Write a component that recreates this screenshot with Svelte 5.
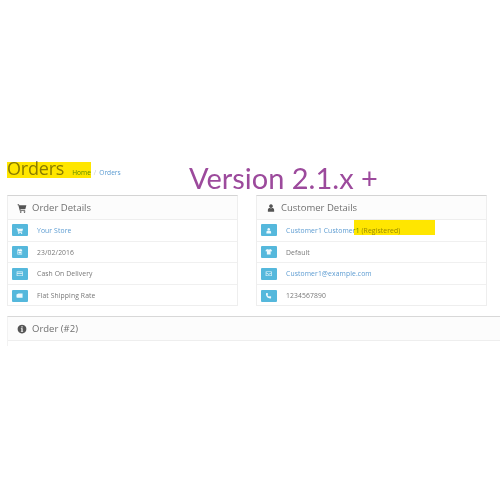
<script>
	const orderRows = [
		{ icon: 'cart', text: 'Your Store', link: true },
		{ icon: 'calendar', text: '23/02/2016' },
		{ icon: 'card', text: 'Cash On Delivery' },
		{ icon: 'truck', text: 'Flat Shipping Rate' }
	];
	const customerRows = [
		{ icon: 'user', text: 'Customer1 Customer1', link: true, extra: ' (Registered)' },
		{ icon: 'shirt', text: 'Default' },
		{ icon: 'mail', text: 'Customer1@example.com', link: true },
		{ icon: 'phone', text: '1234567890' }
	];
	const panels = [
		{ title: 'Order Details', icon: 'cart', rows: orderRows },
		{ title: 'Customer Details', icon: 'user', rows: customerRows }
	];
	const paths = {
		cart: 'M1 2h2.200l.5 1.600H15l-1.600 6H5.400l.3 1.200H13v1.400H4.400L2.200 3.400H1z M6 13a1.300 1.300 0 1 0 .01 0z M12 13a1.300 1.300 0 1 0 .01 0z',
		calendar: 'M3 3h2V1.500h1.500V3h3V1.500H11V3h2v11H3z M4.200 6.500v6.300h7.600V6.500z M5.200 7.500h5.600v4.300H5.200z',
		card: 'M1.500 3h13v10h-13z M2.800 4.300v1.400h10.400V4.300z M2.800 8v3.700h10.400V8z',
		truck: 'M1 5.500 5 3h9v9H2.500a1.500 1.500 0 0 1-1.500-1.500z',
		user: 'M8 2a3 3 0 1 1-.01 0z M3 14v-3c0-2 1.500-3 3-3 1 .7 3 .7 4 0 1.500 0 3 1 3 3v3z',
		shirt: 'M5 2 1.500 4v3.500L4 7v7h8V7l2.500.5V4L11 2c-.6 1.600-5.400 1.600-6 0z',
		mail: 'M1.500 3h13v10h-13z M2.800 4.300v1l5.200 3.200 5.200-3.200v-1z M2.800 6.800v4.900h10.400V6.800L8 10z',
		phone: 'M3 2h2.500l1.200 3-1.500 1.300c.8 1.700 2 2.900 3.700 3.700L10 8.500l3 1.200V12c0 1.200-.8 2-2 2C6.500 14 2 9.500 2 5c0-1.700.8-3 1-3z',
		info: 'M8 1a7 7 0 1 1-.01 0z M7 3.500v2h2v-2z M6.200 6.800V8H7v3H6.200v1.200h3.600V11H9V6.800z'
	};
</script>

<div class="page">
	<div class="page-header">
		<h1>Orders</h1>
		<ul class="breadcrumb">
			<li><a href="#home">Home</a></li>
			<li class="sep">/</li>
			<li><a href="#orders">Orders</a></li>
		</ul>
	</div>

	<div class="columns">
		{#each panels as panel}
			<section class="panel">
				<header class="heading">
					<svg class="head-icon" viewBox="0 0 16 16"><path fill-rule="evenodd" d={paths[panel.icon]} /></svg>
					<h2>{panel.title}</h2>
				</header>
				{#each panel.rows as row}
					<div class="row">
						<span class="badge">
							<svg viewBox="0 0 16 16"><path fill-rule="evenodd" d={paths[row.icon]} /></svg>
						</span>
						<span class="cell">
							{#if row.link}<a href="#row">{row.text}</a>{:else}{row.text}{/if}{#if row.extra}<span class="extra">{row.extra}</span>{/if}
						</span>
					</div>
				{/each}
			</section>
		{/each}
	</div>

	<section class="panel wide">
		<header class="heading">
			<svg class="head-icon" viewBox="0 0 16 16"><path fill-rule="evenodd" d={paths.info} /></svg>
			<h2>Order (#2)</h2>
		</header>
	</section>

	<div class="mark mark-title"></div>
	<div class="mark mark-customer"></div>
	<div class="version">Version 2.1.x +</div>
</div>

<style>
	:global(body) {
		background: #fff;
	}
	.page {
		position: relative;
		width: 500px;
		height: 500px;
		box-sizing: border-box;
		padding: 158px 0 0 7px;
		overflow: hidden;
		font-family: 'Open Sans', sans-serif;
		font-size: 8px;
		color: #777;
		filter: blur(0.45px);
	}
	.page-header {
		display: flex;
		align-items: baseline;
		height: 37px;
	}
	h1 {
		margin: 0 8px 0 0;
		font-size: 18px;
		font-weight: 400;
		line-height: 20px;
		letter-spacing: -0.2px;
		color: #8a8a8a;
	}
	.breadcrumb {
		display: flex;
		gap: 3px;
		margin: 0;
		padding: 0;
		list-style: none;
		font-size: 6.6px;
	}
	.sep {
		color: #ccc;
	}
	a {
		color: #5b9bd1;
		text-decoration: none;
	}
	.columns {
		display: flex;
		gap: 18px;
	}
	.panel {
		width: 231px;
		box-sizing: border-box;
		height: 111px;
		border: 1px solid #eeeeee;
		border-top: 1px solid #d4d4d4;
	}
	.heading {
		display: flex;
		align-items: center;
		height: 23px;
		padding-left: 9px;
		background: #fcfcfc;
		border-bottom: 1px solid #eeeeee;
	}
	.head-icon {
		width: 10px;
		height: 10px;
		margin-right: 5px;
		fill: #555;
	}
	h2 {
		margin: 0;
		font-size: 9.5px;
		font-weight: 400;
		color: #707070;
	}
	.row {
		display: flex;
		align-items: center;
		height: 21.7px;
		box-sizing: border-box;
		padding-left: 4px;
		border-bottom: 1px solid #f0f0f0;
	}
	.row:last-child {
		border-bottom: 0;
	}
	.badge {
		display: flex;
		align-items: center;
		justify-content: center;
		width: 16px;
		height: 12px;
		margin-right: 9px;
		background: #55b8dc;
		border-radius: 1px;
	}
	.badge svg {
		width: 7.500px;
		height: 7.500px;
		fill: #eef9fd;
	}
	.cell {
		white-space: pre;
		font-size: 6.8px;
		letter-spacing: 0.1px;
	}
	.extra {
		color: #999;
	}
	.wide {
		width: 493px;
		height: 30px;
		margin-top: 10px;
		border-right: 0;
		border-left: 1px solid #f2f2f2;
		border-bottom: 0;
		border-top: 1px solid #d8d8d8;
	}
	.mark {
		position: absolute;
		background: #ffe600;
		mix-blend-mode: multiply;
	}
	.mark-title {
		left: 7px;
		top: 162px;
		width: 84px;
		height: 16px;
	}
	.mark-customer {
		left: 354px;
		top: 220px;
		width: 81px;
		height: 15px;
	}
	.version {
		position: absolute;
		left: 189px;
		top: 158px;
		font-family: Lato, sans-serif;
		font-size: 29px;
		line-height: 40px;
		color: #9c4a9c;
		white-space: nowrap;
	}
</style>
